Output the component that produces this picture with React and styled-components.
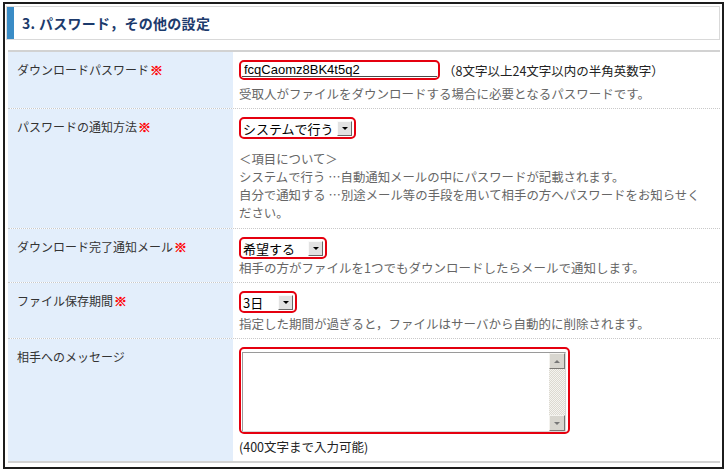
import React from 'react';
import styled, { createGlobalStyle } from 'styled-components';

const GlobalStyle = createGlobalStyle`
  html, body {
    margin: 0;
    padding: 0;
    background: #fff;
  }
  body {
    font-family: "Noto Sans CJK JP", "Liberation Sans", sans-serif;
  }
`;

// outer black frame
const Frame = styled.div`
  box-sizing: border-box;
  width: 721px;
  height: 467px;
  margin: 2px 0 0 3px;
  border: 2px solid #1c1c1c;
  padding: 2px 2px 0 3px;
  background: #fff;
`;

const SectionHeader = styled.h2`
  box-sizing: border-box;
  display: flex;
  align-items: center;
  height: 34px;
  margin: 0 0 10px -2px;
  padding-left: 15px;
  border: 1px solid #d9d9d9;
  box-shadow: inset 7px 0 0 #3a8cc6;
  font-size: 14px;
  font-weight: bold;
  color: #1c3a6c;
  letter-spacing: 0.3px;
`;

const Table = styled.div`
  border-top: 2px solid #d2d2d2;
  border-bottom: 2px solid #d2d2d2;
`;

const Row = styled.div`
  display: grid;
  grid-template-columns: 225px 1fr;
  border-bottom: 1px dotted #c9c9c9;

  &:last-child {
    border-bottom: none;
  }
`;

const Label = styled.div`
  background: #e3eefb;
  padding: 9px 0 0 9px;
  font-size: 12px;
  line-height: 17px;
  color: #333;
`;

const Req = styled.span`
  margin-left: 1px;
  font-size: 13px;
  font-weight: bold;
  color: #ff0000;
  -webkit-text-stroke: 0.4px #ff0000;
`;

const Value = styled.div`
  padding: 8px 0 6px 6px;
  font-size: 12.5px;
  line-height: 17px;
  color: #666;
  white-space: nowrap;
`;

const Line = styled.div`
  display: flex;
  align-items: center;
`;

const Desc = styled.div`
  margin-top: ${p => p.$gap || 0}px;
`;

// the multi-line explanation under the notify-method select
const Notes = styled.div`
  margin-top: 11px;
  font-size: 12.4px;
  line-height: 18px;
`;

const Note = styled.span`
  margin-left: 3px;
  color: #222;
`;

// red annotation ring round each control
const Highlight = styled.span`
  box-sizing: border-box;
  display: inline-flex;
  align-items: stretch;
  width: ${p => p.$w}px;
  height: ${p => p.$h}px;
  padding: ${p => p.$pad || '1px'};
  border: 2px solid #e5000f;
  border-radius: 5px;
  background: #fff;
`;

const TextInput = styled.input`
  flex: 1;
  min-width: 0;
  margin: 0;
  padding: 0 2px;
  border: none;
  border-bottom: 1px solid #4a4a4a;
  background: transparent;
  font-family: "Liberation Sans", sans-serif;
  font-size: 13px;
  color: #000;
  outline: none;
`;

const SelectBox = styled.span`
  flex: 1;
  display: flex;
  align-items: center;
  justify-content: space-between;
  padding-left: 2px;
  font-size: 13px;
  color: #000;
`;

const ArrowButton = styled.span`
  box-sizing: border-box;
  display: flex;
  align-items: center;
  justify-content: center;
  width: 15px;
  height: 15px;
  margin-right: 1px;
  background: #e2e2e2;
  border: 1px solid;
  border-color: #fafafa #6a6a6a #6a6a6a #fafafa;

  &::after {
    content: "";
    border-left: 3px solid transparent;
    border-right: 3px solid transparent;
    border-top: ${p => (p.$up ? 'none' : '3px solid #000')};
    border-bottom: ${p => (p.$up ? '3px solid #000' : 'none')};
  }
`;

const TextBox = styled.span`
  flex: 1;
  display: flex;
  border: 1px solid;
  border-color: #9a9a9a #d8d8d8 #d8d8d8 #9a9a9a;
`;

const Area = styled.textarea`
  flex: 1;
  margin: 0;
  border: none;
  resize: none;
  outline: none;
  background: #fff;
`;

const Scrollbar = styled.span`
  display: flex;
  flex-direction: column;
  width: 16px;
`;

const ScrollButton = styled(ArrowButton)`
  width: 16px;
  height: 16px;
  margin: 0;
  background: #d8d6cf;
  border-color: #f4f3ef #7a7874 #7a7874 #f4f3ef;

  &::after {
    border-left-color: transparent;
    border-right-color: transparent;
    border-top-color: #777;
    border-bottom-color: #777;
  }
`;

const Track = styled.span`
  flex: 1;
  background: repeating-conic-gradient(#dcd9d1 0 25%, #f5f4f0 0 50%) 0 0 / 2px 2px;
`;

const Caption = styled.div`
  margin-top: 4px;
  color: #222;
`;

const Select = ({ width, children }) => (
  <Highlight $w={width} $h={22} $pad="1px 1px 1px 0">
    <SelectBox>
      {children}
      <ArrowButton />
    </SelectBox>
  </Highlight>
);

export default function App() {
  return (
    <>
      <GlobalStyle />
      <Frame>
        <SectionHeader>3. パスワード，その他の設定</SectionHeader>
        <Table>
          <Row>
            <Label>ダウンロードパスワード<Req>※</Req></Label>
            <Value>
              <Line>
                <Highlight $w={201} $h={20}>
                  <TextInput defaultValue="fcqCaomz8BK4t5q2" readOnly />
                </Highlight>
                <Note>（8文字以上24文字以内の半角英数字）</Note>
              </Line>
              <Desc $gap={5}>受取人がファイルをダウンロードする場合に必要となるパスワードです。</Desc>
            </Value>
          </Row>
          <Row>
            <Label>パスワードの通知方法<Req>※</Req></Label>
            <Value>
              <Select width={117}>システムで行う</Select>
              <Notes>
                ＜項目について＞<br />
                システムで行う …自動通知メールの中にパスワードが記載されます。<br />
                自分で通知する …別途メール等の手段を用いて相手の方へパスワードをお知らせく<br />
                ださい。
              </Notes>
            </Value>
          </Row>
          <Row>
            <Label>ダウンロード完了通知メール<Req>※</Req></Label>
            <Value>
              <Select width={88}>希望する</Select>
              <Desc>相手の方がファイルを1つでもダウンロードしたらメールで通知します。</Desc>
            </Value>
          </Row>
          <Row>
            <Label>ファイル保存期間<Req>※</Req></Label>
            <Value>
              <Select width={58}>3日</Select>
              <Desc $gap={2}>指定した期間が過ぎると，ファイルはサーバから自動的に削除されます。</Desc>
            </Value>
          </Row>
          <Row>
            <Label>相手へのメッセージ</Label>
            <Value>
              <Highlight $w={331} $h={87} $pad="3px 2px 0 1px">
                <TextBox>
                  <Area />
                  <Scrollbar>
                    <ScrollButton $up />
                    <Track />
                    <ScrollButton />
                  </Scrollbar>
                </TextBox>
              </Highlight>
              <Caption>(400文字まで入力可能)</Caption>
            </Value>
          </Row>
        </Table>
      </Frame>
    </>
  );
}
